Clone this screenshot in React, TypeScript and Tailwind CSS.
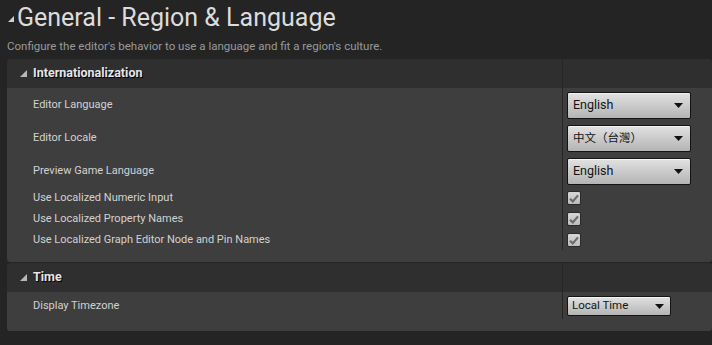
import type { ReactNode } from "react";

const font = { fontFamily: "Roboto, 'Noto Sans CJK TC', sans-serif" };

function Caret() {
  // Unreal-style expanded caret (right-angle triangle)
  return (
    <svg width="7" height="7" viewBox="0 0 7 7" className="shrink-0">
      <path d="M7 0 L7 7 L0 7 Z" fill="#b8b8b8" />
    </svg>
  );
}

function Dropdown({ value, small, cjk }: { value: string; small?: boolean; cjk?: boolean }) {
  return (
    <div
      className={`flex items-center justify-between rounded-[2px] border border-[#141414] bg-gradient-to-b from-[#e2e2e2] to-[#b4b4b4] text-[#141414] shadow-[inset_0_1px_0_#f4f4f4] ${
        small ? "w-[104px] h-[20px] pl-[4px] pr-[6px] text-[11.5px]" : "w-[124px] h-[27px] pl-[5px] pr-[7px] text-[12.5px]"
      }`}
    >
      <span className={cjk ? "text-[11.5px]" : ""}>{value}</span>
      <svg width="9" height="5" viewBox="0 0 9 5">
        <path d="M0 0 L9 0 L4.5 5 Z" fill="#111" />
      </svg>
    </div>
  );
}

function Check() {
  return (
    <div className="w-[14px] h-[14px] rounded-[2px] bg-gradient-to-b from-[#d6d6d6] to-[#bdbdbd] border border-[#2a2a2a] flex items-center justify-center">
      <svg width="10" height="9" viewBox="0 0 10 9">
        <path d="M1 4.8 L3.8 7.4 L9 1.4" stroke="#6b6b6b" strokeWidth="2.2" fill="none" />
      </svg>
    </div>
  );
}

function Row({ label, h, children }: { label: string; h: string; children: ReactNode }) {
  return (
    <div className={`flex ${h}`}>
      <div className="w-[555px] flex items-center pl-[26px] pt-[2px] text-[11px] text-[#d2d2d2]">{label}</div>
      <div className="flex-1 border-l border-[#262626] pl-[4px] pt-[4px]">{children}</div>
    </div>
  );
}

function Header({ title }: { title: string }) {
  return (
    <div className="flex h-[29px] bg-[#2f2f2f] rounded-t-[3px]">
      <div className="w-[555px] flex items-center gap-[6px] pl-[13px]">
        <Caret />
        <span className="text-[12.5px] font-bold text-[#e6e6e6] [text-shadow:1px_1px_0_#000]">{title}</span>
      </div>
      <div className="flex-1 border-l border-[#262626]" />
    </div>
  );
}

export default function App() {
  return (
    <div className="w-[712px] h-[345px] overflow-hidden bg-[#242424]" style={font}>
      <div className="flex items-center h-[35px] pl-[8px] gap-[3px]">
        <svg width="6" height="6" viewBox="0 0 6 6" className="mt-[2px]">
          <path d="M6 0 L6 6 L0 6 Z" fill="#cfcfcf" />
        </svg>
        <span className="text-[25px] leading-none text-[#dcdcdc]">General - Region &amp; Language</span>
      </div>
      <div className="h-[24px] pl-[7px] flex items-center text-[11.5px] text-[#9a9a9a]">
        Configure the editor's behavior to use a language and fit a region's culture.
      </div>

      <div className="ml-[7px] flex flex-col gap-[1px]">
        <div className="rounded-[3px] overflow-hidden">
          <Header title="Internationalization" />
          <div className="bg-[#3e3e3e] pb-[12px]">
            <Row label="Editor Language" h="h-[33px]">
              <Dropdown value="English" />
            </Row>
            <Row label="Editor Locale" h="h-[33px]">
              <Dropdown value="中文（台灣）" cjk />
            </Row>
            <Row label="Preview Game Language" h="h-[33px]">
              <Dropdown value="English" />
            </Row>
            <Row label="Use Localized Numeric Input" h="h-[21px]">
              <Check />
            </Row>
            <Row label="Use Localized Property Names" h="h-[21px]">
              <Check />
            </Row>
            <Row label="Use Localized Graph Editor Node and Pin Names" h="h-[21px]">
              <Check />
            </Row>
          </div>
        </div>

        <div className="rounded-[3px] overflow-hidden">
          <Header title="Time" />
          <div className="bg-[#3e3e3e] pb-[12px]">
            <Row label="Display Timezone" h="h-[27px]">
              <Dropdown value="Local Time" small />
            </Row>
          </div>
        </div>
      </div>
    </div>
  );
}
